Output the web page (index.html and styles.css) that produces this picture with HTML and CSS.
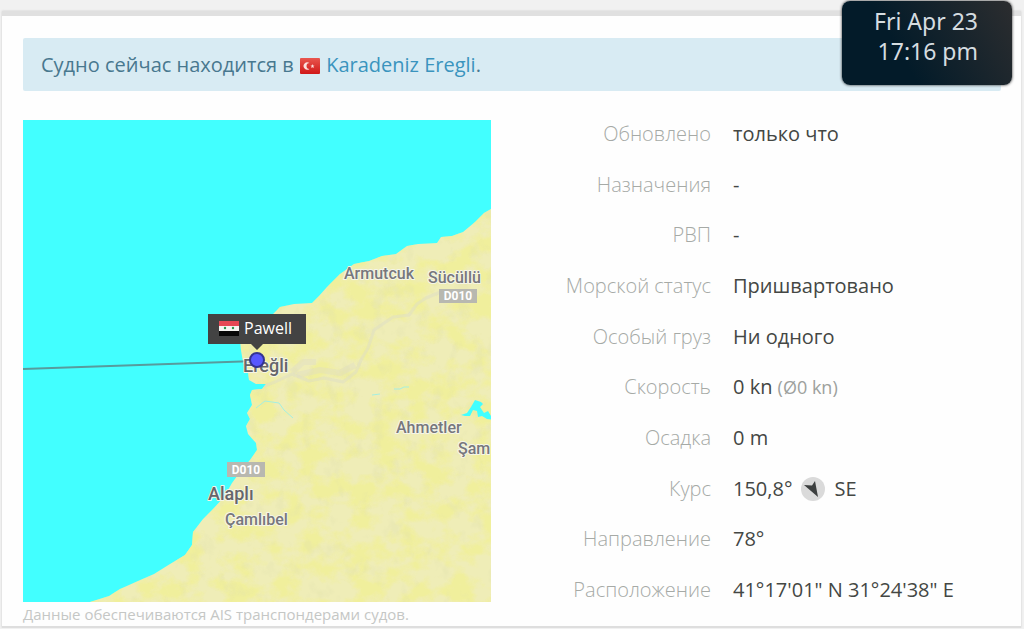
FILE: index.html
```html
<!DOCTYPE html>
<html lang="ru">
<head>
<meta charset="utf-8">
<meta name="viewport" content="width=device-width, initial-scale=1">
<title>Pawell</title>
<link rel="stylesheet" href="styles.css">
</head>
<body>
<main class="panel">
  <p class="notice">Судно сейчас находится в
    <svg class="flag" viewBox="0 0 20 16" role="img" aria-label="Турция">
      <defs><linearGradient id="red" x2="0" y2="1"><stop offset="0" stop-color="#e8564e"/><stop offset="1" stop-color="#d01818"/></linearGradient></defs>
      <rect width="20" height="16" rx="1" fill="url(#red)"/>
      <path d="M9.500 5A3.700 3.700 0 1 0 9.500 11A2.900 2.900 0 1 1 9.500 5Z" fill="#fbe3df"/>
      <path d="M12.4 6l.6 1.4 1.5.1-1.1 1 .4 1.5-1.4-.8-1.2.8.4-1.5-1.1-1 1.4-.1z" fill="#fbe3df"/>
    </svg>
    <a href="#port">Karadeniz Eregli</a>.</p>

  <div class="content">
    <figure class="map">
      <svg class="chart" viewBox="23 120 468 482" role="img" aria-label="Карта">
        <defs>
          <clipPath id="landclip"><path id="land" d="M491 209L484 213L475 222L463 232L452 236L441 237L437 243L418 244L407 246L396 254L382 256L369 261L354 264L340 274L327 287L319 296L312 303L294 304L280 307L273 314L262 327L240 339L241 350L243 362L248 372L249 380L256 384L266 384L262 389L252 390L250 395L252 405L247 413L250 419L246 426L248 434L256 443L257 450L250 460L240 472L232 483L224 497L214 508L203 519L193 532L192 545L185 555L170 564L154 574L138 581L120 589L109 596L90 602L491 602Z"/></clipPath>
          <filter id="patches" x="0" y="0" width="100%" height="100%" color-interpolation-filters="sRGB">
            <feTurbulence type="fractalNoise" baseFrequency="0.04 0.05" numOctaves="4" seed="8"/>
            <feColorMatrix values="0 0 0 0 0.945  0 0 0 0 0.94  0 0 0 0 0.57  4 0 0 0 -1.6"/>
          </filter>
          <filter id="relief" x="0" y="0" width="100%" height="100%" color-interpolation-filters="sRGB">
            <feTurbulence type="fractalNoise" baseFrequency="0.07 0.05" numOctaves="3" seed="21"/>
            <feColorMatrix values="0 0 0 0 0.88  0 0 0 0 0.88  0 0 0 0 0.68  0 5 0 0 -2.9"/>
          </filter>
        </defs>
        <rect x="23" y="120" width="468" height="482" fill="#42ffff"/>
        <g clip-path="url(#landclip)">
          <rect x="23" y="120" width="468" height="482" fill="#efedb7"/>
          <rect x="23" y="120" width="468" height="482" filter="url(#patches)" opacity=".7"/>
          <rect x="23" y="120" width="468" height="482" filter="url(#relief)" opacity=".3"/>
          <g fill="none" stroke="#deddc6" stroke-linejoin="round">
            <path d="M256 389L275 382L292 374L309 381L324 378L343 382L356 372L361 360L368 348L374 330L393 317L409 315L417 304L426 298L443 291" stroke-width="3" opacity=".5"/>
            <path d="M297 375L320 370L340 373L355 365M292 372L303 362L316 362" stroke-width="6" opacity=".4"/>
          </g>
          <path d="M256 408L265 401L279 403L284 410L293 418M372 395l8-1M394 389l6 0 4-2 5 0" fill="none" stroke="#a5efdf"/>
          <path d="M461 415l6-2 4-6 4-7 6 2 2 2-3 3 4 6 4-2 3 5 3 4-7-1-5-3-4 1-1-6-4-1-3 6-5 0z" fill="#42ffff"/>
        </g>
        <path class="track" d="M23 369L257 361"/>
        <g class="road">
          <rect x="439" y="289" width="38" height="14"/><text x="458" y="300">D010</text>
          <rect x="227" y="462" width="38" height="15"/><text x="246" y="474">D010</text>
        </g>
        <g class="place">
          <text x="344" y="279">Armutcuk</text>
          <text x="428" y="283">Sücüllü</text>
          <text x="396" y="433">Ahmetler</text>
          <text x="458" y="454">Şam</text>
          <text x="225" y="525">Çamlıbel</text>
          <text class="town" x="208" y="500">Alaplı</text>
          <text class="town" x="243" y="372">Ereğli</text>
        </g>
        <circle cx="257" cy="360" r="7" fill="#5858ff" stroke="#343491" stroke-width="2"/>
        <path d="M208 314H306V344H263L257 350L251 344H208Z" fill="#434343"/>
        <path d="M219 321h20v5h-20z" fill="#e54854"/><path d="M219 326h20v5h-20z" fill="#f5f5f2"/><path d="M219 331h20v5h-20z" fill="#080808"/>
        <circle cx="225" cy="328" r="1.2" fill="#28934c"/><circle cx="233" cy="328" r="1.2" fill="#28934c"/>
        <text class="ship" x="244" y="334">Pawell</text>
      </svg>
      <figcaption>Данные обеспечиваются AIS транспондерами судов.</figcaption>
    </figure>

    <dl class="facts">
      <div><dt>Обновлено</dt><dd>только что</dd></div>
      <div><dt>Назначения</dt><dd>-</dd></div>
      <div><dt>РВП</dt><dd>-</dd></div>
      <div><dt>Морской статус</dt><dd>Пришвартовано</dd></div>
      <div><dt>Особый груз</dt><dd>Ни одного</dd></div>
      <div><dt>Скорость</dt><dd>0 kn <small>(Ø0 kn)</small></dd></div>
      <div><dt>Осадка</dt><dd>0 m</dd></div>
      <div><dt>Курс</dt><dd class="course">150,8°
        <svg class="compass" viewBox="0 0 24 24" aria-hidden="true"><circle cx="12" cy="12" r="12" fill="#dadada"/><path d="M3 8L11 8.500L14 4L17 20Z" fill="#3c3f3f"/></svg>
        SE</dd></div>
      <div><dt>Направление</dt><dd>78°</dd></div>
      <div><dt>Расположение</dt><dd>41°17'01" N 31°24'38" E</dd></div>
    </dl>
  </div>
</main>
<time class="clock" datetime="17:16">Fri Apr 23<br>17:16 pm</time>
</body>
</html>
```
FILE: styles.css
```css
* { box-sizing: border-box; }
body {
  margin: 0;
  padding: 11px 3px 0 2px;
  background: #f1f1f1;
  color: #444744;
  font-family: "Open Sans", "Noto Sans", sans-serif;
  font-size: 20px;
  line-height: 28px;
}
.panel {
  padding: 22px 20px 0 21px;
  background: #fefefe;
  border-top: 5px solid #e0e0e0;
  border-bottom: 2px solid #dedede;
  box-shadow: 0 0 2px #cccccc;
}
.notice {
  margin: 0 0 29px;
  padding: 13px 18px 12px;
  border-radius: 2px;
  background: #d8ebf3;
  color: #48788f;
}
.notice a { color: #3a94be; text-decoration: none; }
.flag { width: 20px; height: 16px; margin: 0 1px; vertical-align: -2px; }
.content { display: grid; grid-template-columns: 468fr 510fr; }
.map { margin: 0; }
.chart { display: block; width: 100%; height: auto; }
figcaption { color: #c5c7c5; font-size: 15px; line-height: 24px; }
.track { fill: none; stroke: #579b9d; stroke-width: 2; }
.road rect { fill: #b8b8b0; }
.road text { fill: #ffffff; font: bold 12px Roboto, sans-serif; text-anchor: middle; }
.place text {
  fill: #77777c;
  stroke: #f5f5e8;
  stroke-width: 2px;
  stroke-linejoin: round;
  paint-order: stroke;
  font: 500 16px Roboto, sans-serif;
}
.place .town { fill: #66666a; font-size: 18px; }
.ship { fill: #ffffff; font-size: 16px; }
.facts {
  display: flex;
  flex-direction: column;
  justify-content: space-between;
  margin: 0;
  padding-bottom: 22px;
}
.facts div { display: grid; grid-template-columns: 220fr 268fr; gap: 22px; }
dt { color: #a6aaa6; font-weight: 300; text-align: right; }
dd { margin: 0; }
small { color: #9da19d; font-size: 18px; }
.course { display: flex; align-items: center; gap: 9px; }
.compass { width: 24px; height: 24px; }
.clock {
  position: absolute;
  top: 1px;
  right: 12px;
  padding: 5px 34px 19px 32px;
  border-radius: 8px;
  background: linear-gradient(60deg, #031b29 35%, #2c2d2f);
  box-shadow: 0 0 3px #222222;
  color: #d5dce0;
  font-family: "Noto Sans", sans-serif;
  font-size: 23px;
  line-height: 30px;
  text-align: right;
}
```
